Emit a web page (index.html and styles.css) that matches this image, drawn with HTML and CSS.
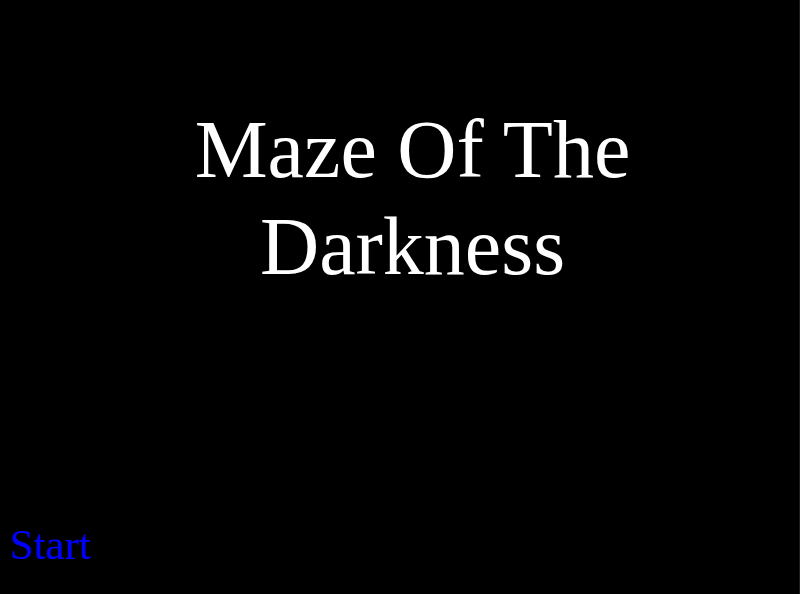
FILE: index.html
```
<!DOCTYPE html>
<html lang="en">
<head>
 <meta charset="UTF-8">
 <meta name="viewport" content="width=device-width,initial-scale=1.0">
 <title>Maze Of The Darkness</title>
 <link rel="stylesheet" href="styles.css">
</head>
<body>
<main class="title_screen">
 <h1 class="game_title">Maze Of The Darkness</h1>
 <button class="start_button" type="button">Start</button>
</main>
</body>
</html>
```

FILE: styles.css
```
body{
  margin: 0;
  background: #000;
  font-family: "Liberation Serif", "Times New Roman", serif;
}
.title_screen{
  box-sizing: border-box;
  min-height: 100vh;
  padding: 101px 8px 25px 10px;
  border-right: 1px solid #1c1c1c;
  display: flex;
  flex-direction: column;
  justify-content: space-between;
  align-items: flex-start;
}
.game_title{
  align-self: center;
  max-width: 7em;
  margin: 0;
  padding-left: 24px;
  color: #fff;
  font-size: 82px;
  font-weight: normal;
  line-height: 97px;
  text-align: center;
}
.start_button{
  padding: 0;
  border: 0;
  background: none;
  color: #00f;
  font-family: inherit;
  font-size: 43px;
  line-height: 48px;
  cursor: pointer;
}
```
